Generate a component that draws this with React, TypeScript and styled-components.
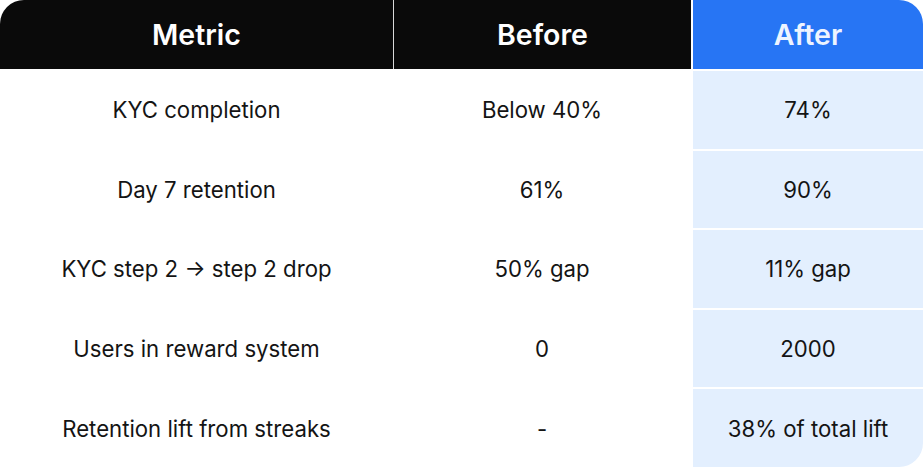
import React from 'react';
import styled, { createGlobalStyle } from 'styled-components';

const GlobalStyle = createGlobalStyle`
  html, body {
    margin: 0;
    padding: 0;
    background: #ffffff;
  }
  body {
    font-family: Inter, 'Noto Sans', sans-serif;
  }
`;

const Table = styled.div`
  width: 923px;
  height: 467px;
  display: grid;
  grid-template-columns: 393px 298px 1fr;
  grid-template-rows: 69px repeat(5, 1fr);
  border-radius: 24px;
  overflow: hidden;
  background: #ffffff;
`;

const HeadCell = styled.div<{ $accent?: boolean; $divider?: boolean }>`
  display: flex;
  align-items: center;
  justify-content: center;
  background: ${p => (p.$accent ? '#2775f4' : '#0a0a0a')};
  color: ${p => (p.$accent ? '#eef4ff' : '#ffffff')};
  font-size: 28.5px;
  font-weight: 600;
  border-left: ${p => (p.$accent ? '2px solid #ffffff' : p.$divider ? '1px solid #d9d9d9' : 'none')};
`;

const Cell = styled.div<{ $accent?: boolean }>`
  display: flex;
  align-items: center;
  justify-content: center;
  font-size: 22.2px;
  font-weight: 400;
  color: #141414;
  background: ${p => (p.$accent ? '#e3effe' : '#ffffff')};
  border-top: 2px solid #ffffff;
  border-left: ${p => (p.$accent ? '2px solid #ffffff' : 'none')};
`;

const rows = [
  ['KYC completion', 'Below 40%', '74%'],
  ['Day 7 retention', '61%', '90%'],
  ['KYC step 2 \u2192 step 2 drop', '50% gap', '11% gap'],
  ['Users in reward system', '0', '2000'],
  ['Retention lift from streaks', '-', '38% of total lift'],
];

const App: React.FC = () => {
  return (
    <>
      <GlobalStyle />
      <Table>
        <HeadCell>Metric</HeadCell>
        <HeadCell $divider>Before</HeadCell>
        <HeadCell $accent>After</HeadCell>
        {rows.map(([metric, before, after]) => (
          <React.Fragment key={metric}>
            <Cell>{metric}</Cell>
            <Cell>{before}</Cell>
            <Cell $accent>{after}</Cell>
          </React.Fragment>
        ))}
      </Table>
    </>
  );
};

export default App;
